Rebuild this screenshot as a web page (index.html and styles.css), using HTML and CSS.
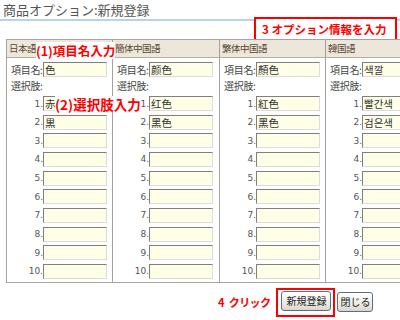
FILE: index.html
```html
<!DOCTYPE html>
<html lang="ja">
<head>
    <meta charset="UTF-8">
    <title>商品オプション:新規登録</title>
    <link rel="stylesheet" href="styles.css">
</head>
<body>
    <h1 class="title">商品オプション:新規登録</h1>
    <div class="note note-3">3 オプション情報を入力</div>

    <div class="options">
        <div class="col">
            <div class="col-head">日本語</div>
            <div class="col-body">
                <div class="name-row"><span class="label">項目名:</span><input class="field" value="色"></div>
                <div class="sel-label">選択肢:</div>
                <div class="opt"><span class="num">1.</span><input class="field" value="赤"></div>
                <div class="opt"><span class="num">2.</span><input class="field" value="黒"></div>
                <div class="opt"><span class="num">3.</span><input class="field"></div>
                <div class="opt"><span class="num">4.</span><input class="field"></div>
                <div class="opt"><span class="num">5.</span><input class="field"></div>
                <div class="opt"><span class="num">6.</span><input class="field"></div>
                <div class="opt"><span class="num">7.</span><input class="field"></div>
                <div class="opt"><span class="num">8.</span><input class="field"></div>
                <div class="opt"><span class="num">9.</span><input class="field"></div>
                <div class="opt"><span class="num">10.</span><input class="field"></div>
            </div>
        </div>
        <div class="col wide">
            <div class="col-head">簡体中国語</div>
            <div class="col-body">
                <div class="name-row"><span class="label">項目名:</span><input class="field" value="颜色"></div>
                <div class="sel-label">選択肢:</div>
                <div class="opt"><span class="num">1.</span><input class="field" value="红色"></div>
                <div class="opt"><span class="num">2.</span><input class="field" value="黑色"></div>
                <div class="opt"><span class="num">3.</span><input class="field"></div>
                <div class="opt"><span class="num">4.</span><input class="field"></div>
                <div class="opt"><span class="num">5.</span><input class="field"></div>
                <div class="opt"><span class="num">6.</span><input class="field"></div>
                <div class="opt"><span class="num">7.</span><input class="field"></div>
                <div class="opt"><span class="num">8.</span><input class="field"></div>
                <div class="opt"><span class="num">9.</span><input class="field"></div>
                <div class="opt"><span class="num">10.</span><input class="field"></div>
            </div>
        </div>
        <div class="col">
            <div class="col-head">繁体中国語</div>
            <div class="col-body">
                <div class="name-row"><span class="label">項目名:</span><input class="field" value="顏色"></div>
                <div class="sel-label">選択肢:</div>
                <div class="opt"><span class="num">1.</span><input class="field" value="紅色"></div>
                <div class="opt"><span class="num">2.</span><input class="field" value="黑色"></div>
                <div class="opt"><span class="num">3.</span><input class="field"></div>
                <div class="opt"><span class="num">4.</span><input class="field"></div>
                <div class="opt"><span class="num">5.</span><input class="field"></div>
                <div class="opt"><span class="num">6.</span><input class="field"></div>
                <div class="opt"><span class="num">7.</span><input class="field"></div>
                <div class="opt"><span class="num">8.</span><input class="field"></div>
                <div class="opt"><span class="num">9.</span><input class="field"></div>
                <div class="opt"><span class="num">10.</span><input class="field"></div>
            </div>
        </div>
        <div class="col">
            <div class="col-head">韓国語</div>
            <div class="col-body">
                <div class="name-row"><span class="label">項目名:</span><input class="field" value="색깔"></div>
                <div class="sel-label">選択肢:</div>
                <div class="opt"><span class="num">1.</span><input class="field" value="빨간색"></div>
                <div class="opt"><span class="num">2.</span><input class="field" value="검은색"></div>
                <div class="opt"><span class="num">3.</span><input class="field"></div>
                <div class="opt"><span class="num">4.</span><input class="field"></div>
                <div class="opt"><span class="num">5.</span><input class="field"></div>
                <div class="opt"><span class="num">6.</span><input class="field"></div>
                <div class="opt"><span class="num">7.</span><input class="field"></div>
                <div class="opt"><span class="num">8.</span><input class="field"></div>
                <div class="opt"><span class="num">9.</span><input class="field"></div>
                <div class="opt"><span class="num">10.</span><input class="field"></div>
            </div>
        </div>
        <div class="note note-1">(1)項目名入力</div>
        <div class="note note-2">(2)選択肢入力</div>
    </div>

    <div class="actions">
        <span class="note-4">4 クリック</span>
        <span class="mark"><button class="btn">新規登録</button></span>
        <button class="btn btn-close">閉じる</button>
    </div>
</body>
</html>
```

FILE: styles.css
```css
html, body {
    overflow: hidden;
}
body {
    margin: 0;
    width: 400px;
    height: 320px;
    background-color: #fff;
    font-family: "Noto Sans CJK JP", "DejaVu Sans", sans-serif;
    color: #444;
    position: relative;
}
.title {
    margin: 0;
    height: 19px;
    padding-left: 3px;
    font-size: 13px;
    font-weight: normal;
    line-height: 20px;
    color: #555;
    border-bottom: 2px solid #b9d1ec;
}
.note {
    position: absolute;
    background-color: #fff;
    color: #f00;
    font-weight: bold;
    white-space: nowrap;
}
.note-3 {
    left: 254px;
    top: 17px;
    width: 133px;
    height: 21px;
    border: 2px solid #f00;
    font-size: 11.5px;
    line-height: 21px;
    padding-left: 6px;
}
.options {
    position: relative;
    display: flex;
    width: max-content;
    margin: 18px 0 0 6px;
    border: 1px solid #a3a3a3;
    border-right: none;
}
.col {
    width: 105px;
    border-right: 1px solid #a3a3a3;
}
.col.wide {
    width: 106px;
}
.col-head {
    height: 17px;
    padding-left: 2px;
    background-color: #ede6da;
    border-bottom: 1px solid #b9ae9c;
    font-size: 9.5px;
    letter-spacing: -0.5px;
    line-height: 17px;
    color: #5a4636;
}
.col-body {
    padding: 4px 0 3px 0;
}
.name-row, .opt {
    display: flex;
    align-items: center;
    height: 15px;
}
.opt {
    margin-bottom: 3.67px;
}
.opt:last-child {
    margin-bottom: 0;
}
.label {
    box-sizing: border-box;
    width: 36px;
    padding-left: 4px;
    font-size: 10px;
    letter-spacing: -0.3px;
    white-space: nowrap;
    color: #444;
}
.sel-label {
    height: 19px;
    padding-left: 4px;
    font-size: 10px;
    letter-spacing: -0.3px;
    line-height: 18px;
}
.num {
    width: 36px;
    text-align: right;
    font-family: "DejaVu Sans", sans-serif;
    font-size: 9px;
    color: #555;
}
.field {
    box-sizing: border-box;
    width: 64px;
    height: 15px;
    margin: 0;
    padding: 0 1px;
    border: 1px solid;
    border-color: #7f7f7f #dcdcdc #dcdcdc #7f7f7f;
    background-color: #ffffe8;
    font-family: "Noto Sans CJK JP", "Noto Sans CJK KR", sans-serif;
    font-size: 10.5px;
    color: #333;
    outline: none;
}
.note-1 {
    left: 29px;
    top: 2px;
    height: 17px;
    font-size: 12.5px;
    line-height: 17px;
}
.note-2 {
    left: 48px;
    top: 56px;
    height: 16px;
    font-size: 13.5px;
    line-height: 16px;
}
.actions {
    display: flex;
    align-items: center;
    margin: 5px 0 0 218px;
}
.note-4 {
    color: #f00;
    font-size: 11px;
    font-weight: bold;
    letter-spacing: -0.6px;
    word-spacing: 3px;
    margin-right: 6px;
}
.mark {
    border: 2px solid #f00;
    padding: 1px 2px 4px 3px;
    margin-right: 2px;
    display: flex;
}
.btn {
    height: 20px;
    padding: 0 4px;
    border: 1px solid #5d6e83;
    border-radius: 3px;
    background: linear-gradient(#ffffff, #e9e7e0 70%, #d8d5cc);
    font-family: "Noto Sans CJK JP", sans-serif;
    font-size: 10px;
    color: #222;
    line-height: 18px;
}
.btn-close {
    padding: 0 2px;
}
```
